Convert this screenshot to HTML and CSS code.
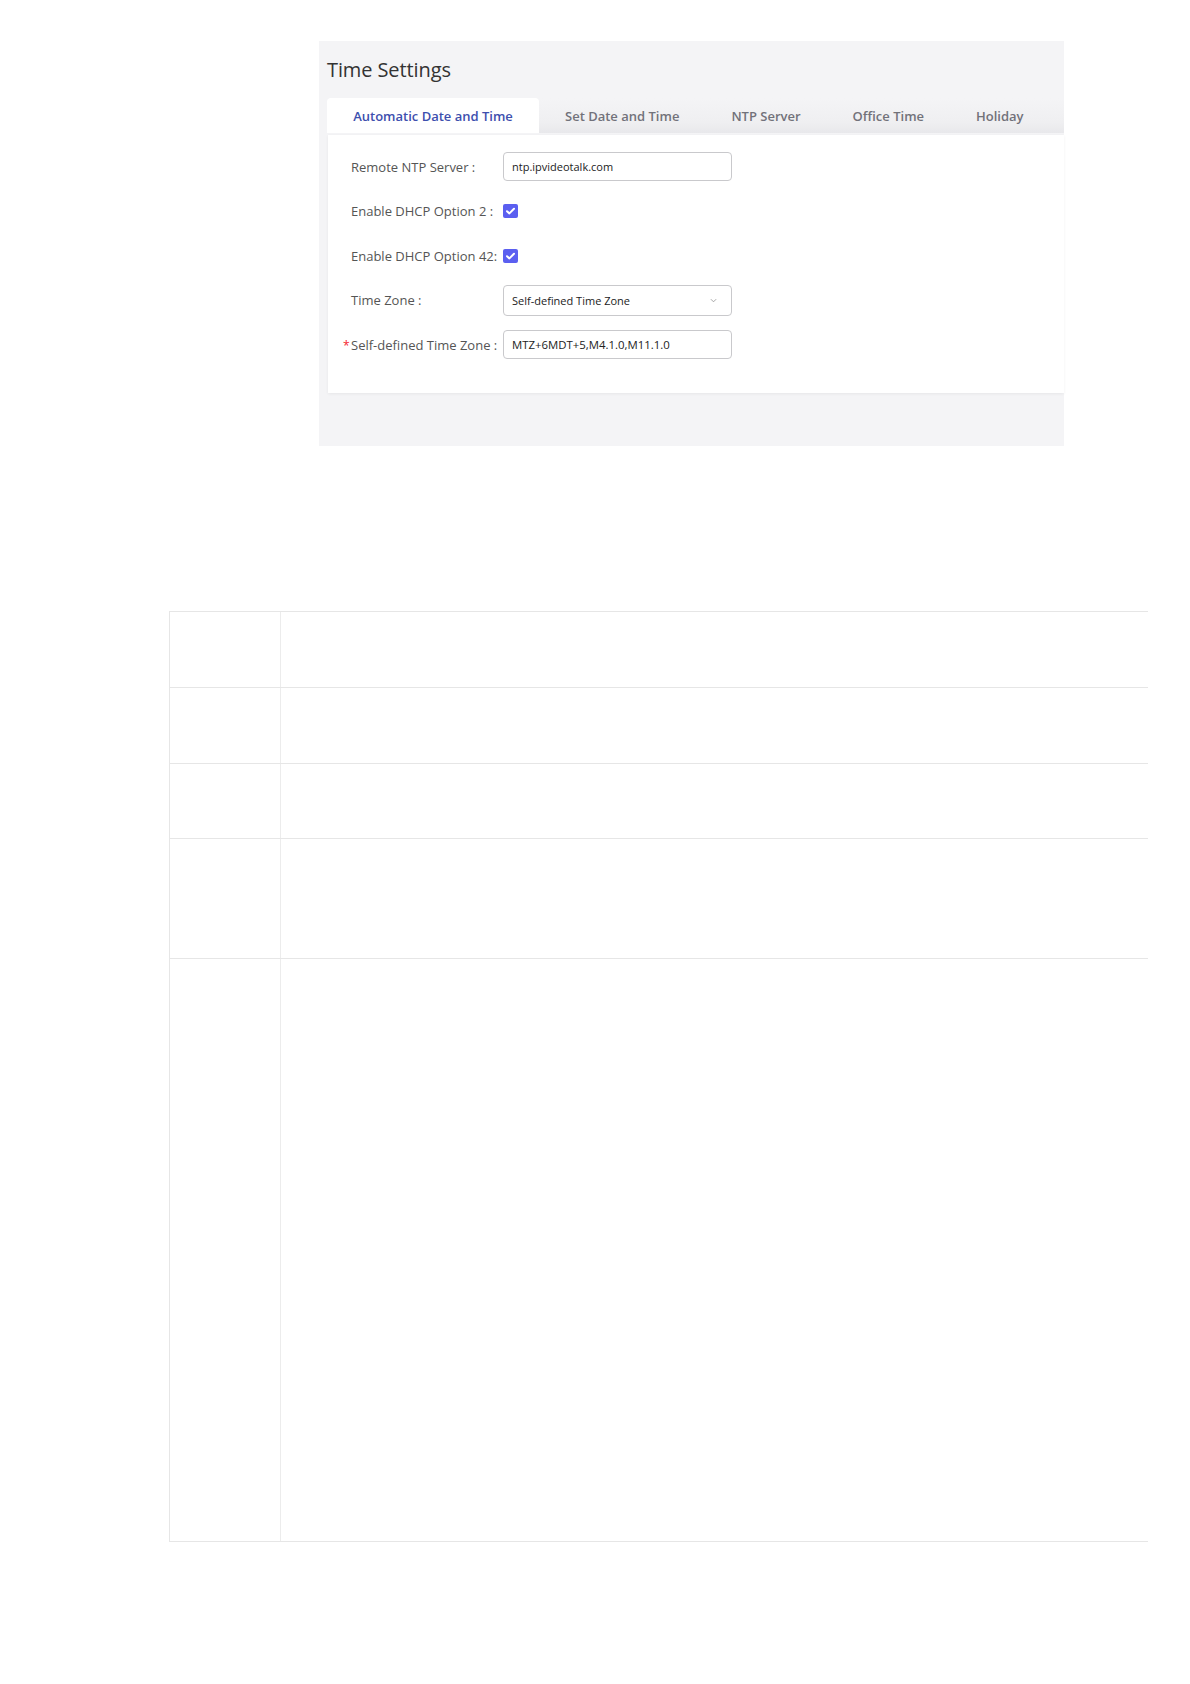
FILE: index.html
```html
<!DOCTYPE html>
<html lang="en">
<head>
<meta charset="utf-8">
<title>Time Settings</title>
<link rel="stylesheet" href="styles.css">
</head>
<body>
<div class="page">
  <section class="panel">
    <h1 class="title">Time Settings</h1>
    <nav class="tabs">
      <div class="tab active">Automatic Date and Time</div>
      <div class="tab">Set Date and Time</div>
      <div class="tab">NTP Server</div>
      <div class="tab">Office Time</div>
      <div class="tab">Holiday</div>
    </nav>
    <div class="card">
      <div class="form">
        <label class="label">Remote NTP Server :</label>
        <div class="field"><div class="input small">ntp.ipvideotalk.com</div></div>

        <label class="label">Enable DHCP Option 2 :</label>
        <div class="field"><span class="check"><svg viewBox="0 0 15 14" width="15" height="14"><path d="M4 7.2 L6.4 9.4 L11 4.8" fill="none" stroke="#fff" stroke-width="2" stroke-linecap="round" stroke-linejoin="round"/></svg></span></div>

        <label class="label">Enable DHCP Option 42:</label>
        <div class="field"><span class="check"><svg viewBox="0 0 15 14" width="15" height="14"><path d="M4 7.2 L6.4 9.4 L11 4.8" fill="none" stroke="#fff" stroke-width="2" stroke-linecap="round" stroke-linejoin="round"/></svg></span></div>

        <label class="label">Time Zone :</label>
        <div class="field"><div class="input small select"><span>Self-defined Time Zone</span><svg class="arrow" viewBox="0 0 8 5" width="7" height="5"><path d="M1 1 L4 4 L7 1" fill="none" stroke="#999" stroke-width="1"/></svg></div></div>

        <label class="label required">Self-defined Time Zone :</label>
        <div class="field"><div class="input tz">MTZ+6MDT+5,M4.1.0,M11.1.0</div></div>
      </div>
    </div>
  </section>

  <div class="table">
    <div class="row r1"><div class="c1"></div><div class="c2"></div></div>
    <div class="row r2"><div class="c1"></div><div class="c2"></div></div>
    <div class="row r3"><div class="c1"></div><div class="c2"></div></div>
    <div class="row r4"><div class="c1"></div><div class="c2"></div></div>
    <div class="row r5"><div class="c1"></div><div class="c2"></div></div>
  </div>
</div>
</body>
</html>
```
FILE: styles.css
```css
* { box-sizing: border-box; }
html, body { margin: 0; padding: 0; background: #fff; }
body { font-family: "Open Sans", "Noto Sans", sans-serif; color: #333; }

.page { width: 1190px; min-height: 1684px; padding-top: 41px; }

.panel {
  margin-left: 319px;
  width: 745px;
  height: 405px;
  background: #f4f4f6;
  padding: 14.5px 0 0 8px;
}

.title {
  margin: 0;
  font-size: 20px;
  line-height: 28px;
  font-weight: 400;
  color: #333;
  letter-spacing: -0.1px;
}

.tabs {
  margin-top: 14.5px;
  display: flex;
  height: 35px;
  background: linear-gradient(#f4f4f6 0%, #efeff1 70%, #e8e8eb 100%);
}
.tab {
  padding: 0 26px;
  font-size: 13px;
  font-weight: 600;
  line-height: 37px;
  color: #72727a;
  white-space: nowrap;
}
.tab.active {
  background: #fff;
  color: #3d4fae;
  border-radius: 4px 4px 0 0;
  padding: 0;
  width: 212px;
  text-align: center;
}

.card {
  margin-top: 2px;
  margin-left: 1px;
  height: 258px;
  background: #fff;
  box-shadow: 0 1px 3px rgba(0,0,0,0.06);
  padding: 17px 0 0 23px;
}

.form {
  display: grid;
  grid-template-columns: 152px 229px;
  grid-auto-rows: 29px;
  row-gap: 15.5px;
  align-items: center;
}

.label {
  font-size: 13px;
  color: #555;
  white-space: nowrap;
}
.required::before {
  content: "*";
  display: inline-block;
  width: 8px;
  margin-left: -8px;
  color: #f5222d;
  font-size: 12px;
}

.field { display: flex; align-items: center; height: 29px; }

.input {
  width: 229px;
  height: 29px;
  border: 1px solid #c9c9cc;
  border-radius: 4px;
  padding: 0 8px;
  font-size: 12px;
  line-height: 27px;
  color: #222;
  white-space: nowrap;
}
.input.small { font-size: 11px; }
.input.tz { font-size: 11.4px; }
.select { display: flex; justify-content: space-between; align-items: center; height: 31px; margin-top: 1px; }
.select .arrow { margin-right: 6px; }

.check {
  display: inline-flex;
  width: 15px;
  height: 14px;
  background: #5b5ff0;
  border-radius: 2px;
}

.table {
  margin-top: 165px;
  margin-left: 169px;
  width: 979px;
  border-top: 1px solid #e6e6e6;
  border-left: 1px solid #e6e6e6;
}
.row {
  display: grid;
  grid-template-columns: 111px 1fr;
  border-bottom: 1px solid #e6e6e6;
}
.row .c1 { border-right: 1px solid #ececec; }
.r1 { height: 76px; }
.r2 { height: 76px; }
.r3 { height: 75px; }
.r4 { height: 120px; }
.r5 { height: 583px; }
```
